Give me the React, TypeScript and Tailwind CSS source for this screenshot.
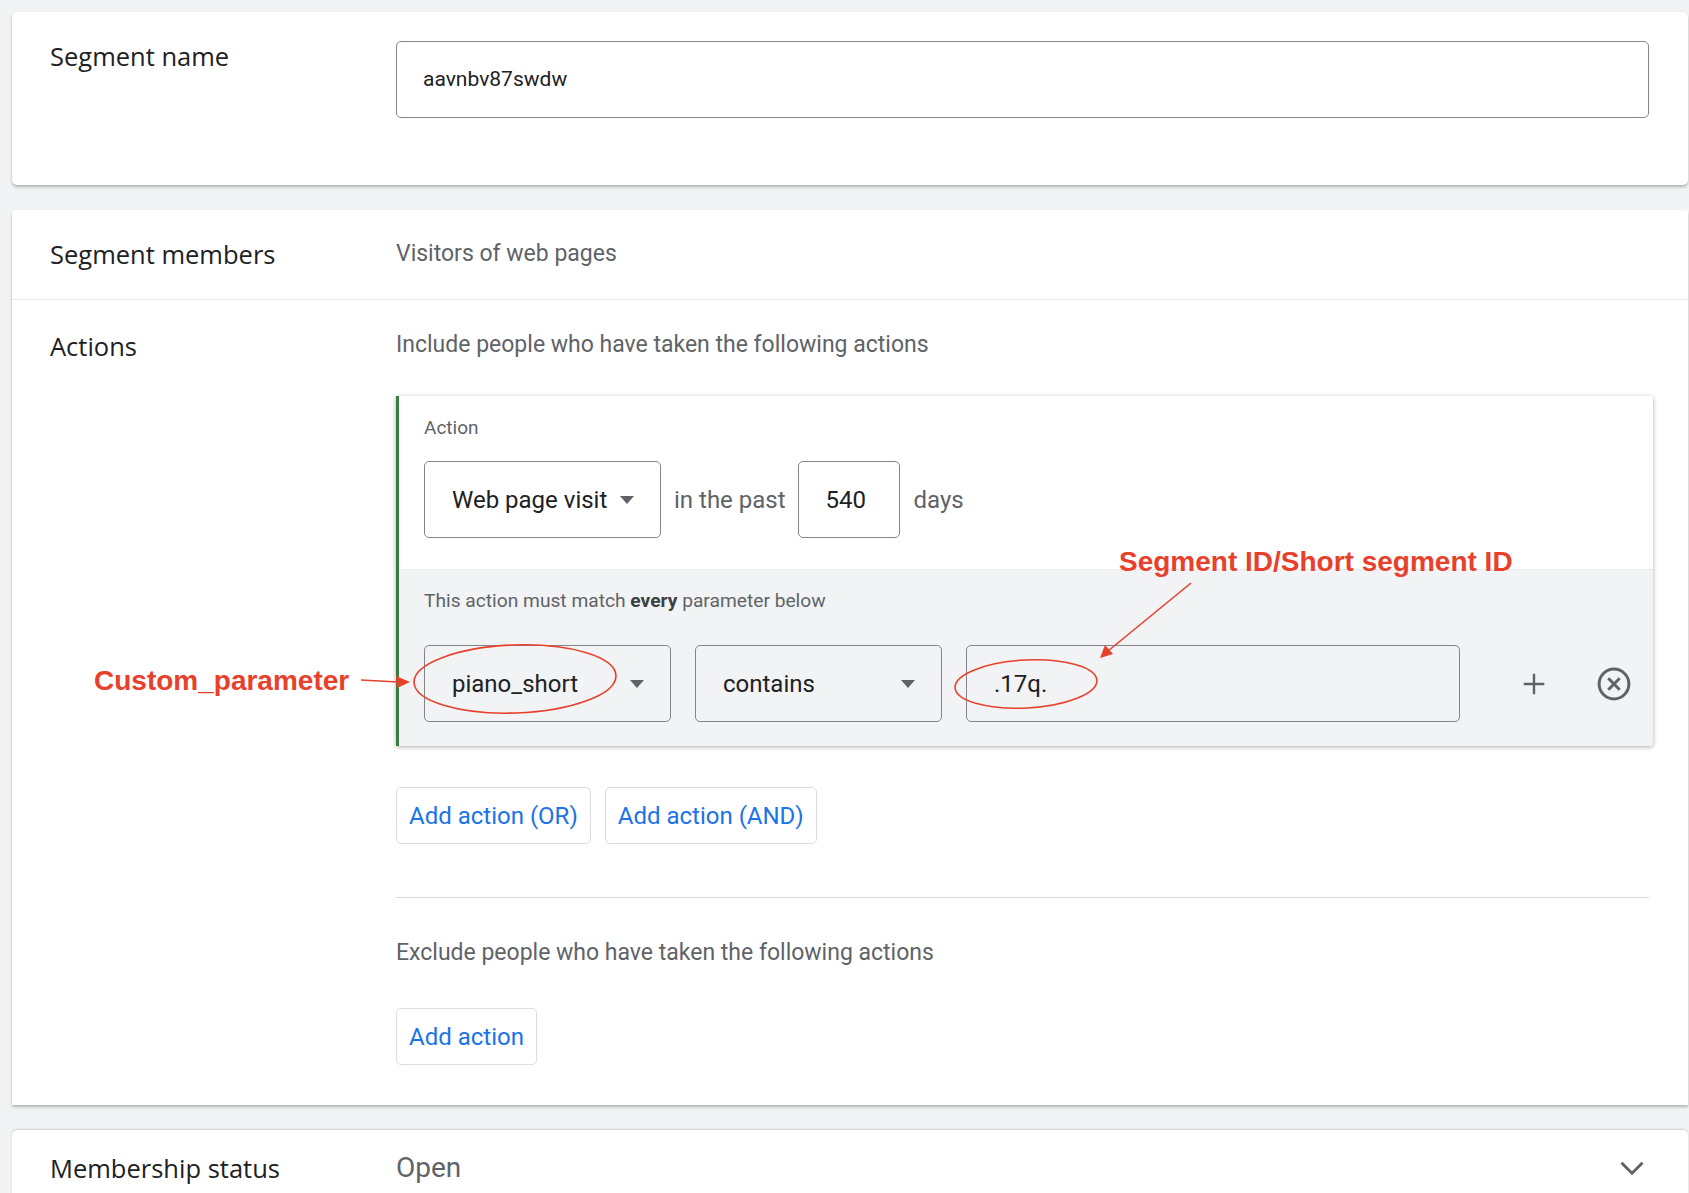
import React from 'react';

const labelFont = { fontFamily: '"Open Sans", Roboto, sans-serif' };
const calloutFont = { fontFamily: '"Liberation Sans", Arial, sans-serif' };

const Caret = () => (
  <svg width="14" height="8" viewBox="0 0 14 8" className="shrink-0">
    <path d="M0 0 L14 0 L7 8 Z" fill="#5f6368" />
  </svg>
);

const Select = ({ value, width }: { value: string; width: string }) => (
  <div className={`${width} h-[77px] flex items-center justify-between pl-[27px] pr-[26px] border border-[#80868b] rounded-[5px] text-[24px] text-[#202124]`}>
    <span>{value}</span>
    <Caret />
  </div>
);

const OutlineButton = ({ children }: { children: React.ReactNode }) => (
  <button className="h-[57px] px-[12px] border border-[#dadce0] rounded-[5px] bg-white text-[#1a73e8] text-[24px]">
    {children}
  </button>
);

const App = () => {
  return (
    <div className="relative min-h-screen bg-[#f1f3f4] pt-3 pl-3 pr-px overflow-hidden text-[#202124]" style={{ fontFamily: 'Roboto, "Liberation Sans", sans-serif' }}>
      {/* Segment name */}
      <div className="bg-white rounded-[5px] shadow-[0_2px_3px_rgba(60,64,67,0.35)] h-[173px] flex items-start pt-[28px] pr-[39px]">
        <div className="w-[384px] pl-[38px] text-[25.5px] leading-[32px]" style={labelFont}>Segment name</div>
        <div className="flex-1 mt-px h-[77px] border border-[#80868b] rounded-[5px] flex items-center px-[26px] text-[21px]">aavnbv87swdw</div>
      </div>

      {/* Segment members + actions */}
      <div className="mt-[25px] bg-white rounded-t-[3px] shadow-[0_2px_3px_rgba(60,64,67,0.35)]">
        <div className="h-[90px] flex items-center border-b border-[#e8eaed]">
          <div className="w-[384px] pl-[38px] text-[25.5px]" style={labelFont}>Segment members</div>
          <div className="text-[23px] text-[#5f6368]">Visitors of web pages</div>
        </div>

        <div className="flex pt-[31px] pb-[40px] pr-[35px]">
          <div className="w-[384px] pl-[38px] text-[25.5px] leading-[30px]" style={labelFont}>Actions</div>
          <div className="flex-1">
            <div className="text-[23px] leading-[28px] text-[#5f6368]">Include people who have taken the following actions</div>

            <div className="mt-[37px] border-l-[3px] border-[#3b7d3f] rounded-r-[3px] shadow-[0_1px_4px_rgba(60,64,67,0.45)] overflow-hidden">
              <div className="bg-white pl-[25px] pt-[21px] pb-[31px]">
                <div className="text-[19px] leading-[22px] text-[#5f6368]">Action</div>
                <div className="mt-[22px] flex items-center text-[24px]">
                  <Select value="Web page visit" width="w-[237px]" />
                  <span className="ml-[13px] text-[#5f6368]">in the past</span>
                  <div className="ml-[12px] w-[102px] h-[77px] border border-[#80868b] rounded-[5px] flex items-center pl-[27px]">540</div>
                  <span className="ml-[14px] text-[#5f6368]">days</span>
                </div>
              </div>
              <div className="bg-[#f1f3f4] pl-[25px] pt-[20px] pb-[24px] border-t border-[#e8eaed]">
                <div className="text-[19.2px] leading-[22px] text-[#5f6368]">
                  This action must match <b className="text-[#3c4043]">every</b> parameter below
                </div>
                <div className="mt-[33px] flex items-center">
                  <Select value="piano_short" width="w-[247px]" />
                  <div className="ml-[24px]">
                    <Select value="contains" width="w-[247px]" />
                  </div>
                  <div className="ml-[24px] w-[494px] h-[77px] border border-[#80868b] rounded-[5px] flex items-center pl-[27px] text-[24px]">.17q.</div>
                  <button className="ml-[58px] w-[32px] h-[32px] flex items-center justify-center">
                    <svg width="26" height="26" viewBox="0 0 24 24"><path d="M12 2.5v19M2.5 12h19" stroke="#5f6368" strokeWidth="2.2" /></svg>
                  </button>
                  <button className="ml-[45px] w-[38px] h-[38px] flex items-center justify-center">
                    <svg width="38" height="38" viewBox="0 0 24 24">
                      <circle cx="12" cy="12" r="9.4" fill="none" stroke="#5f6368" strokeWidth="1.9" />
                      <path d="M8.4 8.4l7.2 7.2M15.6 8.4l-7.2 7.2" stroke="#5f6368" strokeWidth="1.9" />
                    </svg>
                  </button>
                </div>
              </div>
            </div>

            <div className="mt-[41px] flex gap-[14px]">
              <OutlineButton>Add action (OR)</OutlineButton>
              <OutlineButton>Add action (AND)</OutlineButton>
            </div>

            <div className="mt-[53px] mr-[4px] border-t border-[#dadce0]" />

            <div className="mt-[41px] text-[23px] leading-[28px] text-[#5f6368]">Exclude people who have taken the following actions</div>
            <div className="mt-[41px]">
              <OutlineButton>Add action</OutlineButton>
            </div>
          </div>
        </div>
      </div>

      {/* Membership status */}
      <div className="mt-[25px] bg-white rounded-t-[5px] shadow-[0_-1px_2px_rgba(60,64,67,0.2)] h-[90px] flex items-start pt-[22px] pr-[38px]">
        <div className="w-[384px] pl-[38px] text-[25.5px] leading-[32px]" style={labelFont}>Membership status</div>
        <div className="flex-1 text-[28px] leading-[32px] text-[#5f6368]">Open</div>
        <svg width="36" height="36" viewBox="0 0 24 24" className="-mt-[2px]"><path d="M5 8.5L12 15.5l7-7" fill="none" stroke="#5f6368" strokeWidth="2" /></svg>
      </div>

      {/* Callouts */}
      <div className="absolute left-[94px] top-[664px] text-[28px] leading-[34px] font-bold text-[#e8402b]" style={calloutFont}>Custom_parameter</div>
      <div className="absolute left-[1119px] top-[545px] text-[28px] leading-[34px] font-bold text-[#e8402b]" style={calloutFont}>Segment ID/Short segment ID</div>
      <svg className="absolute left-0 top-0 pointer-events-none" width="1689" height="1193">
        <g fill="none" stroke="#e8402b" strokeWidth="1.6">
          <ellipse cx="515" cy="679" rx="101" ry="34" transform="rotate(-2 515 679)" />
          <ellipse cx="1026" cy="684" rx="71" ry="24" transform="rotate(-3 1026 684)" />
          <path d="M361 680 L398 682" />
          <path d="M1191 583 L1108 651" />
        </g>
        <g fill="#e8402b">
          <path d="M410 682 L396 676 L397 688 Z" />
          <path d="M1100 658 L1105 645 L1113 654 Z" />
        </g>
      </svg>
    </div>
  );
};

export default App;
